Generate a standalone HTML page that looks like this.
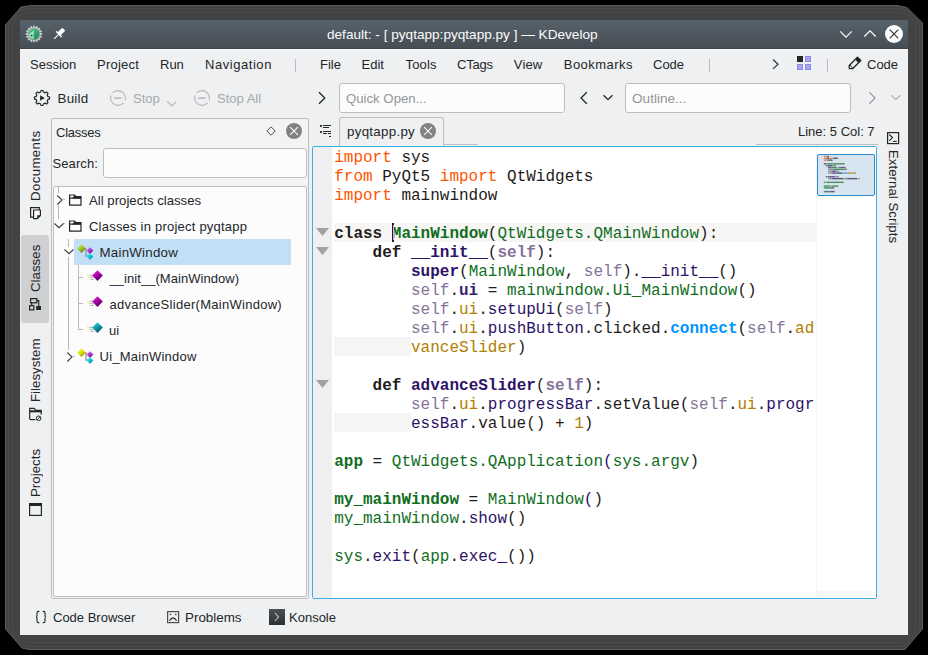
<!DOCTYPE html>
<html><head><meta charset="utf-8">
<style>
*{margin:0;padding:0;box-sizing:border-box}
html,body{width:928px;height:655px;overflow:hidden;background:#000}
body{-webkit-font-smoothing:antialiased}
body{position:relative;font-family:"Liberation Sans",sans-serif;font-size:13px;color:#232629}
.a{position:absolute}
.t{position:absolute;white-space:pre;line-height:16px}
.g{color:#a6a9ac}
.code{position:absolute;font-family:"Liberation Mono",monospace;font-size:16px;line-height:19px;white-space:pre;color:#1f1c1b}
.b{font-weight:bold}
.code b{font-weight:bold}
.k{color:#ff5500}.gr{color:#0f6e1e}.pu{color:#2d1366}.pu2{color:#3b1f6a}.sf{color:#86739a}.go{color:#b08000}.bl{color:#0095ff}
</style></head><body>
<!-- shadow -->
<svg class="a" style="left:0;top:0" width="928" height="655">
<polygon points="31,5.5 897,5.5 907,7.5 922.5,23 922.5,629 905,649.5 29,649.5 22,648 5.5,629 5.5,25 21,7" fill="#434343" stroke="#5e5e5e" stroke-width="1"/><polygon points="31,8.5 897,8.5 907,10 919.5,23 919.5,629 904,646.5 29,646.5 22,645 8.5,629 8.5,25 21,10" fill="none" stroke="#4c4c4c" stroke-width="1"/><polygon points="31,12.5 897,12.5 907,14 915.5,23 915.5,629 903,642.5 29,642.5 22,641 12.5,629 12.5,25 21,14" fill="none" stroke="#4a4a4a" stroke-width="1"/>
</svg>
<!-- window -->
<div class="a" style="left:20px;top:20px;width:888px;height:615px;background:#eff0f1"></div>
<!-- title bar -->
<div class="a" style="left:20px;top:20px;width:888px;height:29px;background:linear-gradient(#56626b,#474e55);border-bottom:1px solid #3b4248"></div>
<div class="t" style="left:327px;top:27px;color:#fcfcfc;font-size:13.6px">default: - [ pyqtapp:pyqtapp.py ] — KDevelop</div>

<!-- menu -->
<div class="t" style="left:30px;top:56.5px">Session</div>
<div class="t" style="left:97px;top:56.5px;letter-spacing:0.25px">Project</div>
<div class="t" style="left:160px;top:56.5px">Run</div>
<div class="t" style="left:205px;top:56.5px;letter-spacing:0.55px">Navigation</div>
<div class="a" style="left:295px;top:59px;width:1px;height:13px;background:#b9bbbe"></div>
<div class="t" style="left:320px;top:56.5px">File</div>
<div class="t" style="left:361.5px;top:56.5px">Edit</div>
<div class="t" style="left:405.5px;top:56.5px;letter-spacing:0.15px">Tools</div>
<div class="t" style="left:457px;top:56.5px;letter-spacing:-0.2px">CTags</div>
<div class="t" style="left:513.8px;top:56.5px;letter-spacing:0.15px">View</div>
<div class="t" style="left:563.8px;top:56.5px;letter-spacing:0.45px">Bookmarks</div>
<div class="t" style="left:653px;top:56.5px">Code</div>
<div class="a" style="left:709px;top:59px;width:1px;height:13px;background:#b9bbbe"></div>
<div class="a" style="left:827px;top:59px;width:1px;height:13px;background:#b9bbbe"></div>
<div class="t" style="left:867px;top:56.5px">Code</div>

<!-- toolbar -->
<div class="t" style="left:57.5px;top:90.5px;font-size:13.4px;letter-spacing:0.2px">Build</div>
<div class="t g" style="left:133px;top:90.5px">Stop</div>
<div class="t g" style="left:217px;top:90.5px">Stop All</div>
<div class="a" style="left:339px;top:83px;width:226px;height:30px;background:#fcfcfc;border:1px solid #bcbebf;border-radius:3px"></div>
<div class="t" style="left:346px;top:90.5px;color:#939598;font-size:13.2px">Quick Open...</div>
<div class="a" style="left:625px;top:83px;width:226px;height:30px;background:#fcfcfc;border:1px solid #bcbebf;border-radius:3px"></div>
<div class="t" style="left:632px;top:90.5px;color:#939598;font-size:13.6px">Outline...</div>

<!-- left tabs -->
<div class="a" style="left:21px;top:235px;width:28px;height:88px;background:#cfd0d1;border-radius:3px"></div>

<!-- classes panel -->
<div class="a" style="left:51px;top:118px;width:258px;height:481px;background:#f2f3f3;border:1px solid #bcbebf;border-radius:2px"></div>
<div class="t" style="left:56px;top:124.5px;letter-spacing:-0.25px">Classes</div>
<div class="t" style="left:52.5px;top:156px;letter-spacing:0.1px">Search:</div>
<div class="a" style="left:103px;top:148px;width:204px;height:30px;background:#fcfcfc;border:1px solid #bcbebf;border-radius:3px"></div>
<div class="a" style="left:53px;top:186px;width:254px;height:411px;background:#fcfcfc;border:1px solid #bcbebf;border-radius:2px"></div>
<div class="a" style="left:74px;top:239px;width:217px;height:26px;background:#c2e0f5"></div>
<div class="t" style="left:89px;top:192.5px;font-size:13.2px">All projects classes</div>
<div class="t" style="left:89px;top:218.5px;letter-spacing:0.22px">Classes in project pyqtapp</div>
<div class="t" style="left:99.5px;top:244.5px;font-size:13.3px;letter-spacing:0.25px">MainWindow</div>
<div class="t" style="left:109.5px;top:270.5px;letter-spacing:0.05px">__init__(MainWindow)</div>
<div class="t" style="left:109.5px;top:296.5px;letter-spacing:0.28px">advanceSlider(MainWindow)</div>
<div class="t" style="left:109px;top:322.5px">ui</div>
<div class="t" style="left:99.5px;top:348.5px;letter-spacing:0.25px">Ui_MainWindow</div>

<!-- editor tabs -->
<div class="a" style="left:339px;top:117px;width:105px;height:29px;background:#eff0f1;border:1px solid #bcbebf;border-bottom:none;border-radius:3px 3px 0 0"></div>
<div class="a" style="left:444px;top:144px;width:34px;height:1px;background:#bcbebf"></div><div class="a" style="left:756px;top:144px;width:122px;height:1px;background:#bcbebf"></div>
<div class="t" style="left:347px;top:123.5px;letter-spacing:0.3px;font-size:13.3px">pyqtapp.py</div>
<div class="t" style="left:798px;top:123.5px">Line: 5 Col: 7</div>

<!-- editor -->
<div class="a" style="left:312px;top:146px;width:565px;height:453px;background:#fff;border:1px solid #3daee9;border-radius:2px"></div>
<div class="a" style="left:313px;top:147px;width:19px;height:451px;background:#efefef"></div>

<div class="a" style="left:334px;top:223px;width:482px;height:19px;background:#f7f6f5"></div>
<div class="a" style="left:334px;top:337px;width:77px;height:19px;background:repeating-conic-gradient(#efefef 0 25%,#fbfbfb 0 50%) 0 0/2px 2px"></div>
<div class="a" style="left:334px;top:413px;width:77px;height:19px;background:repeating-conic-gradient(#efefef 0 25%,#fbfbfb 0 50%) 0 0/2px 2px"></div>
<div class="code" style="left:334.2px;top:149px"><span class="k">import</span> sys
<span class="k">from</span> PyQt5 <span class="k">import</span> QtWidgets
<span class="k">import</span> mainwindow

<b>class</b> <b class="gr">MainWindow</b>(<span class="gr">QtWidgets.QMainWindow</span>):
    <b>def</b> <b class="pu">__init__</b>(<b class="sf">self</b>):
        <b class="pu">super</b>(<span class="gr">MainWindow</span>, <span class="sf">self</span>).<span class="pu">__init__</span>()
        <span class="sf">self</span>.<b class="pu2">ui</b> = <span class="gr">mainwindow.Ui_MainWindow</span>()
        <span class="sf">self</span>.<span class="go">ui</span>.<span class="pu">setupUi</span>(<span class="sf">self</span>)
        <span class="sf">self</span>.<span class="go">ui</span>.<span class="pu">pushButton</span>.clicked.<b class="bl">connect</b>(<span class="sf">self</span>.<span class="go">ad</span>
        <span class="go">vanceSlider</span>)

    <b>def</b> <b class="pu">advanceSlider</b>(<b class="sf">self</b>):
        <span class="sf">self</span>.<span class="go">ui</span>.<span class="pu">progressBar</span>.setValue(<span class="sf">self</span>.<span class="go">ui</span>.<span class="pu">progr</span>
        <span class="pu">essBar</span>.value() + <span class="go">1</span>)

<b class="gr">app</b> = <span class="gr">QtWidgets.QApplication</span><span class="pu">(</span><span class="gr">sys.argv</span>)

<b class="gr">my_mainWindow</b> = <span class="gr">MainWindow</span><span class="pu">(</span>)
<span class="gr">my_mainWindow</span>.<span class="pu">show</span>()

<span class="gr">sys</span>.<span class="pu">exit</span>(<span class="gr">app</span>.<span class="pu">exec_</span>())
</div>
<div class="a" style="left:392px;top:223px;width:2px;height:19px;background:#1f1c1b"></div>
<div class="a" style="left:392.5px;top:225px;width:1px;height:15px;background:#f0a0e8"></div>
<!-- fold markers -->
<svg class="a" style="left:316px;top:227px" width="14" height="10"><polygon points="0,1 13,1 6.5,9" fill="#a2a2a2"/></svg>
<svg class="a" style="left:316px;top:246px" width="14" height="10"><polygon points="0,1 13,1 6.5,9" fill="#a2a2a2"/></svg>
<svg class="a" style="left:316px;top:379px" width="14" height="10"><polygon points="0,1 13,1 6.5,9" fill="#a2a2a2"/></svg>
<!-- minimap -->
<div class="a" style="left:816px;top:147px;width:60px;height:451px;background:#fff;border-left:1px solid #f5f5f5"></div><div class="a" style="left:817px;top:591px;width:59px;height:6px;background:#f8f8f8"></div>
<div class="a" style="left:817px;top:154px;width:58px;height:42px;background:#d6e5f0;border:1px solid #2c8ad0;border-radius:2px"></div>
<svg class="a" style="left:817px;top:147px" width="59" height="60"><g opacity="0.7"><rect x="6.80" y="8.70" width="3.12" height="1.4" fill="#ff5500"/><rect x="10.44" y="8.70" width="1.56" height="1.4" fill="#1f1c1b"/><rect x="6.80" y="10.55" width="2.08" height="1.4" fill="#ff5500"/><rect x="9.40" y="10.55" width="2.60" height="1.4" fill="#1f1c1b"/><rect x="12.52" y="10.55" width="3.12" height="1.4" fill="#ff5500"/><rect x="16.16" y="10.55" width="4.68" height="1.4" fill="#1f1c1b"/><rect x="6.80" y="12.41" width="3.12" height="1.4" fill="#ff5500"/><rect x="10.44" y="12.41" width="5.20" height="1.4" fill="#1f1c1b"/><rect x="6.80" y="16.11" width="2.60" height="1.4" fill="#1f1c1b"/><rect x="9.92" y="16.11" width="5.20" height="1.4" fill="#0f6e1e"/><rect x="15.12" y="16.11" width="0.52" height="1.4" fill="#1f1c1b"/><rect x="15.64" y="16.11" width="10.92" height="1.4" fill="#0f6e1e"/><rect x="26.56" y="16.11" width="1.04" height="1.4" fill="#1f1c1b"/><rect x="8.88" y="17.96" width="1.56" height="1.4" fill="#1f1c1b"/><rect x="10.96" y="17.96" width="4.16" height="1.4" fill="#2d1366"/><rect x="15.12" y="17.96" width="0.52" height="1.4" fill="#1f1c1b"/><rect x="15.64" y="17.96" width="2.08" height="1.4" fill="#86739a"/><rect x="17.72" y="17.96" width="1.04" height="1.4" fill="#1f1c1b"/><rect x="10.96" y="19.82" width="2.60" height="1.4" fill="#2d1366"/><rect x="13.56" y="19.82" width="0.52" height="1.4" fill="#1f1c1b"/><rect x="14.08" y="19.82" width="5.20" height="1.4" fill="#0f6e1e"/><rect x="19.28" y="19.82" width="0.52" height="1.4" fill="#1f1c1b"/><rect x="20.32" y="19.82" width="2.08" height="1.4" fill="#86739a"/><rect x="22.40" y="19.82" width="1.04" height="1.4" fill="#1f1c1b"/><rect x="23.44" y="19.82" width="4.16" height="1.4" fill="#2d1366"/><rect x="27.60" y="19.82" width="1.04" height="1.4" fill="#1f1c1b"/><rect x="10.96" y="21.67" width="2.08" height="1.4" fill="#86739a"/><rect x="13.04" y="21.67" width="0.52" height="1.4" fill="#1f1c1b"/><rect x="13.56" y="21.67" width="1.04" height="1.4" fill="#2d1366"/><rect x="15.12" y="21.67" width="0.52" height="1.4" fill="#1f1c1b"/><rect x="16.16" y="21.67" width="12.48" height="1.4" fill="#0f6e1e"/><rect x="28.64" y="21.67" width="1.04" height="1.4" fill="#1f1c1b"/><rect x="10.96" y="23.52" width="2.08" height="1.4" fill="#86739a"/><rect x="13.04" y="23.52" width="0.52" height="1.4" fill="#1f1c1b"/><rect x="13.56" y="23.52" width="1.04" height="1.4" fill="#b08000"/><rect x="14.60" y="23.52" width="0.52" height="1.4" fill="#1f1c1b"/><rect x="15.12" y="23.52" width="3.64" height="1.4" fill="#2d1366"/><rect x="18.76" y="23.52" width="0.52" height="1.4" fill="#1f1c1b"/><rect x="19.28" y="23.52" width="2.08" height="1.4" fill="#86739a"/><rect x="21.36" y="23.52" width="0.52" height="1.4" fill="#1f1c1b"/><rect x="10.96" y="25.38" width="2.08" height="1.4" fill="#86739a"/><rect x="13.04" y="25.38" width="0.52" height="1.4" fill="#1f1c1b"/><rect x="13.56" y="25.38" width="1.04" height="1.4" fill="#b08000"/><rect x="14.60" y="25.38" width="0.52" height="1.4" fill="#1f1c1b"/><rect x="15.12" y="25.38" width="5.20" height="1.4" fill="#2d1366"/><rect x="20.32" y="25.38" width="4.68" height="1.4" fill="#1f1c1b"/><rect x="25.00" y="25.38" width="3.64" height="1.4" fill="#0095ff"/><rect x="28.64" y="25.38" width="0.52" height="1.4" fill="#1f1c1b"/><rect x="29.16" y="25.38" width="2.08" height="1.4" fill="#86739a"/><rect x="31.24" y="25.38" width="0.52" height="1.4" fill="#1f1c1b"/><rect x="31.76" y="25.38" width="6.76" height="1.4" fill="#b08000"/><rect x="38.52" y="25.38" width="0.52" height="1.4" fill="#1f1c1b"/><rect x="8.88" y="29.08" width="1.56" height="1.4" fill="#1f1c1b"/><rect x="10.96" y="29.08" width="6.76" height="1.4" fill="#2d1366"/><rect x="17.72" y="29.08" width="0.52" height="1.4" fill="#1f1c1b"/><rect x="18.24" y="29.08" width="2.08" height="1.4" fill="#86739a"/><rect x="20.32" y="29.08" width="1.04" height="1.4" fill="#1f1c1b"/><rect x="10.96" y="30.94" width="2.08" height="1.4" fill="#86739a"/><rect x="13.04" y="30.94" width="0.52" height="1.4" fill="#1f1c1b"/><rect x="13.56" y="30.94" width="1.04" height="1.4" fill="#b08000"/><rect x="14.60" y="30.94" width="0.52" height="1.4" fill="#1f1c1b"/><rect x="15.12" y="30.94" width="5.72" height="1.4" fill="#2d1366"/><rect x="20.84" y="30.94" width="5.20" height="1.4" fill="#1f1c1b"/><rect x="26.04" y="30.94" width="2.08" height="1.4" fill="#86739a"/><rect x="28.12" y="30.94" width="0.52" height="1.4" fill="#1f1c1b"/><rect x="28.64" y="30.94" width="1.04" height="1.4" fill="#b08000"/><rect x="29.68" y="30.94" width="0.52" height="1.4" fill="#1f1c1b"/><rect x="30.20" y="30.94" width="5.72" height="1.4" fill="#2d1366"/><rect x="35.92" y="30.94" width="4.16" height="1.4" fill="#1f1c1b"/><rect x="40.60" y="30.94" width="0.52" height="1.4" fill="#1f1c1b"/><rect x="41.64" y="30.94" width="0.52" height="1.4" fill="#b08000"/><rect x="42.16" y="30.94" width="0.52" height="1.4" fill="#1f1c1b"/><rect x="6.80" y="34.64" width="1.56" height="1.4" fill="#0f6e1e"/><rect x="8.88" y="34.64" width="0.52" height="1.4" fill="#1f1c1b"/><rect x="9.92" y="34.64" width="11.44" height="1.4" fill="#0f6e1e"/><rect x="21.36" y="34.64" width="0.52" height="1.4" fill="#2d1366"/><rect x="21.88" y="34.64" width="4.16" height="1.4" fill="#0f6e1e"/><rect x="26.04" y="34.64" width="0.52" height="1.4" fill="#1f1c1b"/><rect x="6.80" y="38.35" width="6.76" height="1.4" fill="#0f6e1e"/><rect x="14.08" y="38.35" width="0.52" height="1.4" fill="#1f1c1b"/><rect x="15.12" y="38.35" width="5.20" height="1.4" fill="#0f6e1e"/><rect x="20.32" y="38.35" width="1.04" height="1.4" fill="#1f1c1b"/><rect x="6.80" y="40.20" width="6.76" height="1.4" fill="#0f6e1e"/><rect x="13.56" y="40.20" width="0.52" height="1.4" fill="#1f1c1b"/><rect x="14.08" y="40.20" width="2.08" height="1.4" fill="#2d1366"/><rect x="16.16" y="40.20" width="1.04" height="1.4" fill="#1f1c1b"/><rect x="6.80" y="43.91" width="1.56" height="1.4" fill="#0f6e1e"/><rect x="8.36" y="43.91" width="0.52" height="1.4" fill="#1f1c1b"/><rect x="8.88" y="43.91" width="2.08" height="1.4" fill="#2d1366"/><rect x="10.96" y="43.91" width="0.52" height="1.4" fill="#1f1c1b"/><rect x="11.48" y="43.91" width="1.56" height="1.4" fill="#0f6e1e"/><rect x="13.04" y="43.91" width="0.52" height="1.4" fill="#1f1c1b"/><rect x="13.56" y="43.91" width="2.60" height="1.4" fill="#2d1366"/><rect x="16.16" y="43.91" width="1.56" height="1.4" fill="#1f1c1b"/></g></svg>

<!-- bottom -->
<div class="t" style="left:53px;top:609.5px">Code Browser</div>
<div class="t" style="left:185px;top:609.5px;font-size:13.4px">Problems</div>
<div class="t" style="left:289px;top:609.5px">Konsole</div>
<!-- icons -->
<svg width="0" height="0" style="position:absolute"><defs><linearGradient id="gm" x1="0" y1="0" x2="0.6" y2="1"><stop offset="0" stop-color="#e040e0"/><stop offset="0.5" stop-color="#b000b0"/><stop offset="1" stop-color="#500050"/></linearGradient><linearGradient id="gc" x1="0" y1="0" x2="0.6" y2="1"><stop offset="0" stop-color="#40e0e8"/><stop offset="0.5" stop-color="#10a0b0"/><stop offset="1" stop-color="#055560"/></linearGradient><linearGradient id="gy" x1="0" y1="0" x2="0.6" y2="1"><stop offset="0" stop-color="#d8f060"/><stop offset="0.6" stop-color="#a0c020"/><stop offset="1" stop-color="#607a10"/></linearGradient><linearGradient id="gy2" x1="0" y1="0" x2="0.6" y2="1"><stop offset="0" stop-color="#ffff60"/><stop offset="0.6" stop-color="#e0e000"/><stop offset="1" stop-color="#909000"/></linearGradient><linearGradient id="gp" x1="0" y1="0" x2="0.6" y2="1"><stop offset="0" stop-color="#e070f0"/><stop offset="0.6" stop-color="#b030d0"/><stop offset="1" stop-color="#6a1090"/></linearGradient><linearGradient id="gcy" x1="0" y1="0" x2="0.6" y2="1"><stop offset="0" stop-color="#70f0ff"/><stop offset="0.6" stop-color="#10c8e0"/><stop offset="1" stop-color="#0880a0"/></linearGradient></defs></svg>
<svg class="a" style="left:24px;top:24px" width="20" height="20"><path d="M9.10,3.46 L9.19,1.74 L10.81,1.74 L10.90,3.46 L11.67,3.61 L12.41,2.06 L13.91,2.68 L13.34,4.31 L13.98,4.74 L15.27,3.58 L16.42,4.73 L15.26,6.02 L15.69,6.66 L17.32,6.09 L17.94,7.59 L16.39,8.33 L16.54,9.10 L18.26,9.19 L18.26,10.81 L16.54,10.90 L16.39,11.67 L17.94,12.41 L17.32,13.91 L15.69,13.34 L15.26,13.98 L16.42,15.27 L15.27,16.42 L13.98,15.26 L13.34,15.69 L13.91,17.32 L12.41,17.94 L11.67,16.39 L10.90,16.54 L10.81,18.26 L9.19,18.26 L9.10,16.54 L8.33,16.39 L7.59,17.94 L6.09,17.32 L6.66,15.69 L6.02,15.26 L4.73,16.42 L3.58,15.27 L4.74,13.98 L4.31,13.34 L2.68,13.91 L2.06,12.41 L3.61,11.67 L3.46,10.90 L1.74,10.81 L1.74,9.19 L3.46,9.10 L3.61,8.33 L2.06,7.59 L2.68,6.09 L4.31,6.66 L4.74,6.02 L3.58,4.73 L4.73,3.58 L6.02,4.74 L6.66,4.31 L6.09,2.68 L7.59,2.06 L8.33,3.61Z" fill="#d4d6d8"/><circle cx="10" cy="10" r="6.3" fill="#a9adb0"/><circle cx="10" cy="10" r="5.5" fill="url(#kg)"/><path d="M5,12.2 Q6,8 10.5,6.5 Q8.8,9.5 10,14.9 Q6.3,14.6 5,12.2Z" fill="#c8f5d8" opacity=".75"/><circle cx="7.6" cy="11.6" r="0.9" fill="#234"/><defs><linearGradient id="kg" x1="0" y1="0" x2="1" y2="1"><stop offset="0" stop-color="#55d08a"/><stop offset="1" stop-color="#1a7f5e"/></linearGradient></defs></svg>
<svg class="a" style="left:50.5px;top:25.8px" width="16" height="16"><g transform="rotate(45 8 8)"><rect x="5.9" y="1.2" width="4.2" height="6.6" rx="0.8" fill="#fcfcfc"/><rect x="4" y="7.4" width="8" height="1.5" fill="#fcfcfc"/><rect x="7.4" y="8.5" width="1.2" height="6.3" fill="#fcfcfc"/></g></svg>
<svg class="a" style="left:838px;top:28px" width="16" height="12"><polyline points="2.2,3.4 8,9.2 13.8,3.4" fill="none" stroke="#fcfcfc" stroke-width="1.25"/></svg>
<svg class="a" style="left:862px;top:28px" width="16" height="12"><polyline points="2.3,8.5 8,2.8 13.7,8.5" fill="none" stroke="#fcfcfc" stroke-width="1.25"/></svg>
<svg class="a" style="left:884px;top:24px" width="20" height="20"><circle cx="10" cy="10" r="9" fill="#fcfcfc"/><path d="M5.7,5.7 L14.3,14.3 M14.3,5.7 L5.7,14.3" stroke="#31363b" stroke-width="1.2"/></svg>
<div class="a" style="left:20px;top:49px;width:888px;height:1px;background:#fcfcfc"></div>
<svg class="a" style="left:770px;top:57px" width="12" height="14"><polyline points="3,2.5 8,7.2 3,11.9" fill="none" stroke="#31363b" stroke-width="1.25"/></svg>
<svg class="a" style="left:796px;top:55px" width="16" height="16"><rect x="1" y="1" width="6" height="6" fill="#232627"/><rect x="9.5" y="1.5" width="5" height="5" fill="#a5a5f2" stroke="#8c8ce6"/><rect x="1.5" y="9.5" width="5" height="5" fill="#a5a5f2" stroke="#8c8ce6"/><rect x="9.5" y="9.5" width="5" height="5" fill="#a5a5f2" stroke="#8c8ce6"/></svg>
<svg class="a" style="left:844px;top:53px" width="22" height="20"><path d="M13.5,4.2 L16.8,7.5 L8.8,15.5 L5.3,15.6 L5.2,12.5Z" fill="none" stroke="#232627" stroke-width="1.3" stroke-linejoin="round"/><path d="M13.5,4.2 L16.8,7.5 L14.4,9.9 L11.1,6.6Z" fill="#232627"/><path d="M5.8,12.3 Q7.5,12.8 8.6,15" fill="none" stroke="#232627" stroke-width="1"/></svg>
<svg class="a" style="left:33px;top:89px" width="18" height="18"><path d="M7.67,3.05 L7.93,1.48 L10.07,1.48 L10.33,3.05 L12.27,3.85 L13.56,2.92 L15.08,4.44 L14.15,5.73 L14.95,7.67 L16.52,7.93 L16.52,10.07 L14.95,10.33 L14.15,12.27 L15.08,13.56 L13.56,15.08 L12.27,14.15 L10.33,14.95 L10.07,16.52 L7.93,16.52 L7.67,14.95 L5.73,14.15 L4.44,15.08 L2.92,13.56 L3.85,12.27 L3.05,10.33 L1.48,10.07 L1.48,7.93 L3.05,7.67 L3.85,5.73 L2.92,4.44 L4.44,2.92 L5.73,3.85Z" fill="none" stroke="#232627" stroke-width="1.15" stroke-linejoin="round"/><path d="M7.1,6.2 L11.8,9 L7.1,11.8Z" fill="#232627"/></svg>
<svg class="a" style="left:109px;top:89px" width="18" height="18"><circle cx="9" cy="9" r="7.4" fill="none" stroke="#b4b6b8" stroke-width="1.1" stroke-dasharray="20.5 2.8 20.5 2.8" stroke-dashoffset="18"/><rect x="5.3" y="8.3" width="7.4" height="1.5" fill="#b4b6b8"/></svg>
<svg class="a" style="left:193px;top:89px" width="18" height="18"><circle cx="9" cy="9" r="7.4" fill="none" stroke="#b4b6b8" stroke-width="1.1" stroke-dasharray="20.5 2.8 20.5 2.8" stroke-dashoffset="18"/><rect x="5.3" y="8.3" width="7.4" height="1.5" fill="#b4b6b8"/></svg>
<svg class="a" style="left:166px;top:100px" width="12" height="8"><polyline points="1.3,1.5 5.8,6 10.3,1.5" fill="none" stroke="#b4b6b8" stroke-width="1.1"/></svg>
<svg class="a" style="left:316px;top:90px" width="12" height="16"><polyline points="3,2.2 8.8,8 3,13.8" fill="none" stroke="#232627" stroke-width="1.3"/></svg>
<svg class="a" style="left:577px;top:90px" width="12" height="16"><polyline points="9.8,2.2 4,8 9.8,13.8" fill="none" stroke="#232627" stroke-width="1.3"/></svg>
<svg class="a" style="left:602px;top:93px" width="12" height="8"><polyline points="1.5,2.3 6,6.6 10.5,2.3" fill="none" stroke="#232627" stroke-width="1.3"/></svg>
<svg class="a" style="left:866px;top:90px" width="12" height="16"><polyline points="3.3,2.2 9,8 3.3,13.8" fill="none" stroke="#8e9093" stroke-width="1.1"/></svg>
<svg class="a" style="left:890px;top:93px" width="12" height="8"><polyline points="1.3,2.3 5.8,6.6 10.3,2.3" fill="none" stroke="#a0a2a5" stroke-width="1.1"/></svg>
<div class="a" style="left:27.700000000000003px;top:125px;height:81px;width:16px;writing-mode:vertical-rl;transform:rotate(180deg);font-size:13.3px;line-height:16px;white-space:pre;text-align:center;letter-spacing:0.35px">Documents</div>
<div class="a" style="left:27.9px;top:240px;height:57px;width:16px;writing-mode:vertical-rl;transform:rotate(180deg);font-size:13.3px;line-height:16px;white-space:pre;text-align:center">Classes</div>
<div class="a" style="left:27.9px;top:334px;height:73px;width:16px;writing-mode:vertical-rl;transform:rotate(180deg);font-size:13.3px;line-height:16px;white-space:pre;text-align:center">Filesystem</div>
<div class="a" style="left:27.9px;top:444px;height:58px;width:16px;writing-mode:vertical-rl;transform:rotate(180deg);font-size:13.3px;line-height:16px;white-space:pre;text-align:center">Projects</div>
<div class="a" style="left:884.5px;top:150px;width:16px;height:100px;writing-mode:vertical-rl;font-size:13.3px;line-height:16px;white-space:pre">External Scripts</div>
<svg class="a" style="left:28px;top:204px" width="16" height="16"><path d="M5.6,13.2 H2.6 V3.6 H11.3 V6" fill="none" stroke="#232627" stroke-width="1.2"/><path d="M5.6,6 H12.4 V11.5 L9.4,14.6 H5.6Z" fill="#fcfcfc" stroke="#232627" stroke-width="1.2" stroke-linejoin="round"/><path d="M9.2,14.6 V11.3 H12.4Z" fill="#232627"/></svg>
<svg class="a" style="left:28px;top:296px" width="16" height="16"><rect x="2.6" y="2.6" width="6.2" height="4.2" fill="none" stroke="#232627" stroke-width="1.2"/><rect x="1.6" y="9.7" width="4.2" height="4.2" fill="none" stroke="#232627" stroke-width="1.2"/><rect x="8.2" y="10" width="4.8" height="4" fill="#232627"/><path d="M3.7,6.8 V9.7 M8.8,4.6 H10.8 V10" fill="none" stroke="#232627" stroke-width="1.1"/></svg>
<svg class="a" style="left:28px;top:406px" width="16" height="16"><path d="M1.7,13.6 V2.4 H6.2 L7.8,4.3 H13.2 V8.5" fill="none" stroke="#232627" stroke-width="1.2"/><rect x="1.7" y="4.3" width="11.5" height="2" fill="#232627"/><path d="M2,13.6 H7.3" stroke="#232627" stroke-width="1.2"/><circle cx="10.6" cy="12.3" r="2.3" fill="none" stroke="#232627" stroke-width="1"/><path d="M9,13.9 L12.2,10.7" stroke="#232627" stroke-width="0.9"/></svg>
<svg class="a" style="left:28px;top:501px" width="16" height="16"><rect x="1.6" y="2.6" width="11.8" height="11.8" fill="none" stroke="#232627" stroke-width="1.2"/><rect x="1.4" y="2.4" width="12.2" height="2.6" fill="#232627"/></svg>
<svg class="a" style="left:265px;top:125px" width="12" height="12"><path d="M6,1.8 L10.2,6 L6,10.2 L1.8,6Z" fill="none" stroke="#4d4d4d" stroke-width="1"/></svg>
<svg class="a" style="left:285px;top:121.80000000000001px" width="18" height="18"><circle cx="9" cy="9" r="8" fill="#808284"/><path d="M5.1,5.1 L12.9,12.9 M12.9,5.1 L5.1,12.9" stroke="#fcfcfc" stroke-width="1.1"/></svg>
<svg class="a" style="left:419px;top:122px" width="18" height="18"><circle cx="9" cy="9" r="8" fill="#808284"/><path d="M5.1,5.1 L12.9,12.9 M12.9,5.1 L5.1,12.9" stroke="#fcfcfc" stroke-width="1.1"/></svg>
<svg class="a" style="left:318px;top:123px" width="16" height="16"><rect x="2" y="2" width="2" height="2" fill="#3b3b3b"/><rect x="2" y="8" width="2" height="2" fill="#3b3b3b"/><path d="M5,2.5 H13 M5,4.5 H11 M5,8.5 H13 M5,10.5 H9 M10,10.5 H13 M11,13.5 H13" stroke="#232627" stroke-width="1.1"/></svg>
<svg class="a" style="left:885px;top:130px" width="16" height="16"><rect x="2.6" y="2.6" width="11" height="11" fill="none" stroke="#232627" stroke-width="1.2"/><polyline points="4.2,4.5 7.5,7.6 4.3,10.8" fill="none" stroke="#232627" stroke-width="1.1"/><path d="M8,11.4 H11.8" stroke="#232627" stroke-width="1.1"/></svg>
<svg class="a" style="left:33px;top:609px" width="16" height="16"><path d="M6.3,2.4 H5.4 Q4,2.4 4,3.8 V6.6 Q4,8 3,8 Q4,8 4,9.4 V12.2 Q4,13.6 5.4,13.6 H6.3 M9.7,2.4 H10.6 Q12,2.4 12,3.8 V6.6 Q12,8 13,8 Q12,8 12,9.4 V12.2 Q12,13.6 10.6,13.6 H9.7" fill="none" stroke="#232627" stroke-width="1.1"/></svg>
<svg class="a" style="left:165px;top:609px" width="16" height="16"><rect x="2.6" y="2.6" width="11" height="11" fill="none" stroke="#4d4d4d" stroke-width="1.2"/><rect x="4.7" y="4.7" width="1.5" height="1.5" fill="#4d4d4d"/><rect x="10" y="4.7" width="1.5" height="1.5" fill="#4d4d4d"/><path d="M4.5,11.8 Q8,6 11.7,11.8" fill="none" stroke="#232627" stroke-width="1.1"/></svg>
<svg class="a" style="left:268px;top:608px" width="18" height="18"><rect x="1" y="1" width="16" height="16" fill="url(#kon)"/><polyline points="7,5 10.5,9 7,13" fill="none" stroke="#c8cccc" stroke-width="1.1"/><defs><linearGradient id="kon" x1="0" y1="0" x2="0" y2="1"><stop offset="0" stop-color="#4a5254"/><stop offset="1" stop-color="#2b3133"/></linearGradient></defs></svg>
<div class="a" style="left:58px;top:187px;width:1px;height:6px;background:#b8b8b8"></div>
<div class="a" style="left:58px;top:205px;width:1px;height:14px;background:#b8b8b8"></div>
<div class="a" style="left:63px;top:199px;width:2px;height:1px;background:#b8b8b8"></div>
<div class="a" style="left:63px;top:223px;width:2px;height:1px;background:#b8b8b8"></div>
<div class="a" style="left:68px;top:239px;width:1px;height:8px;background:#b8b8b8"></div>
<div class="a" style="left:68px;top:257px;width:1px;height:93px;background:#b8b8b8"></div>
<div class="a" style="left:78px;top:265px;width:1px;height:64px;background:#b8b8b8"></div>
<div class="a" style="left:78px;top:277px;width:5px;height:1px;background:#b8b8b8"></div>
<div class="a" style="left:78px;top:303px;width:5px;height:1px;background:#b8b8b8"></div>
<div class="a" style="left:78px;top:329px;width:5px;height:1px;background:#b8b8b8"></div>
<div class="a" style="left:73px;top:356px;width:2px;height:1px;background:#b8b8b8"></div>
<svg class="a" style="left:54.5px;top:194px" width="10" height="12"><polyline points="2.3,1.5 7,6 2.3,10.5" fill="none" stroke="#3a3d40" stroke-width="1.05"/></svg>
<svg class="a" style="left:53px;top:222px" width="12" height="8"><polyline points="1.5,1.5 6,5.7 10.5,1.5" fill="none" stroke="#3a3d40" stroke-width="1.05"/></svg>
<svg class="a" style="left:63px;top:248px" width="12" height="8"><polyline points="1.5,1.5 6,5.7 10.5,1.5" fill="none" stroke="#3a3d40" stroke-width="1.05"/></svg>
<svg class="a" style="left:64.5px;top:350.6px" width="10" height="12"><polyline points="2.3,1.5 7,6 2.3,10.5" fill="none" stroke="#3a3d40" stroke-width="1.05"/></svg>
<svg class="a" style="left:68.5px;top:194px" width="14" height="14"><path d="M0.6,1 H5.5 L7,2.6 H12 V11.2 H0.6Z" fill="none" stroke="#232627" stroke-width="1.2"/><path d="M5.5,1 L7,2.6 H12 V4.6 H3.4Z" fill="#232627"/><path d="M0.6,4.1 H12" stroke="#232627" stroke-width="1.2"/></svg>
<svg class="a" style="left:68.5px;top:220px" width="14" height="14"><path d="M0.6,1 H5.5 L7,2.6 H12 V11.2 H0.6Z" fill="none" stroke="#232627" stroke-width="1.2"/><path d="M5.5,1 L7,2.6 H12 V4.6 H3.4Z" fill="#232627"/><path d="M0.6,4.1 H12" stroke="#232627" stroke-width="1.2"/></svg>
<svg class="a" style="left:76.5px;top:243.5px" width="18" height="18"><path d="M5,5 L9,5 L9,12 L12,12" fill="none" stroke="#8a9aa6" stroke-width="1.3"/><path d="M4.5,0.3 L8.8,4.6 L4.5,8.9 L0.2,4.6Z" fill="url(#gy)"/><path d="M13,3.2 L16.4,6.6 L13,10 L9.6,6.6Z" fill="url(#gp)"/><path d="M13,9 L16.4,12.4 L13,15.8 L9.6,12.4Z" fill="url(#gcy)"/></svg>
<svg class="a" style="left:76.5px;top:347.5px" width="18" height="18"><path d="M5,5 L9,5 L9,12 L12,12" fill="none" stroke="#8a9aa6" stroke-width="1.3"/><path d="M4.5,0.3 L8.8,4.6 L4.5,8.9 L0.2,4.6Z" fill="url(#gy2)"/><path d="M13,3.2 L16.4,6.6 L13,10 L9.6,6.6Z" fill="url(#gp)"/><path d="M13,9 L16.4,12.4 L13,15.8 L9.6,12.4Z" fill="url(#gcy)"/></svg>
<svg class="a" style="left:86px;top:269.5px" width="18" height="14"><path d="M1,5.3 H6 M2,7.3 H6.5 M3,9.3 H7" stroke="#ecdc98" stroke-width="0.9"/><path d="M4,5.3 H7 M4.5,7.3 H7.5 M5,9.3 H8" stroke="#9ab6c4" stroke-width="0.9"/><path d="M11.5,0.3 L16.8,5.6 L11.5,10.9 L6.2,5.6Z" fill="url(#gm)"/></svg>
<svg class="a" style="left:86px;top:295.5px" width="18" height="14"><path d="M1,5.3 H6 M2,7.3 H6.5 M3,9.3 H7" stroke="#ecdc98" stroke-width="0.9"/><path d="M4,5.3 H7 M4.5,7.3 H7.5 M5,9.3 H8" stroke="#9ab6c4" stroke-width="0.9"/><path d="M11.5,0.3 L16.8,5.6 L11.5,10.9 L6.2,5.6Z" fill="url(#gm)"/></svg>
<svg class="a" style="left:86px;top:321.5px" width="18" height="14"><path d="M1,5.3 H6 M2,7.3 H6.5 M3,9.3 H7" stroke="#ecdc98" stroke-width="0.9"/><path d="M4,5.3 H7 M4.5,7.3 H7.5 M5,9.3 H8" stroke="#9ab6c4" stroke-width="0.9"/><path d="M11.5,0.3 L16.8,5.6 L11.5,10.9 L6.2,5.6Z" fill="url(#gc)"/></svg>
</body></html>
